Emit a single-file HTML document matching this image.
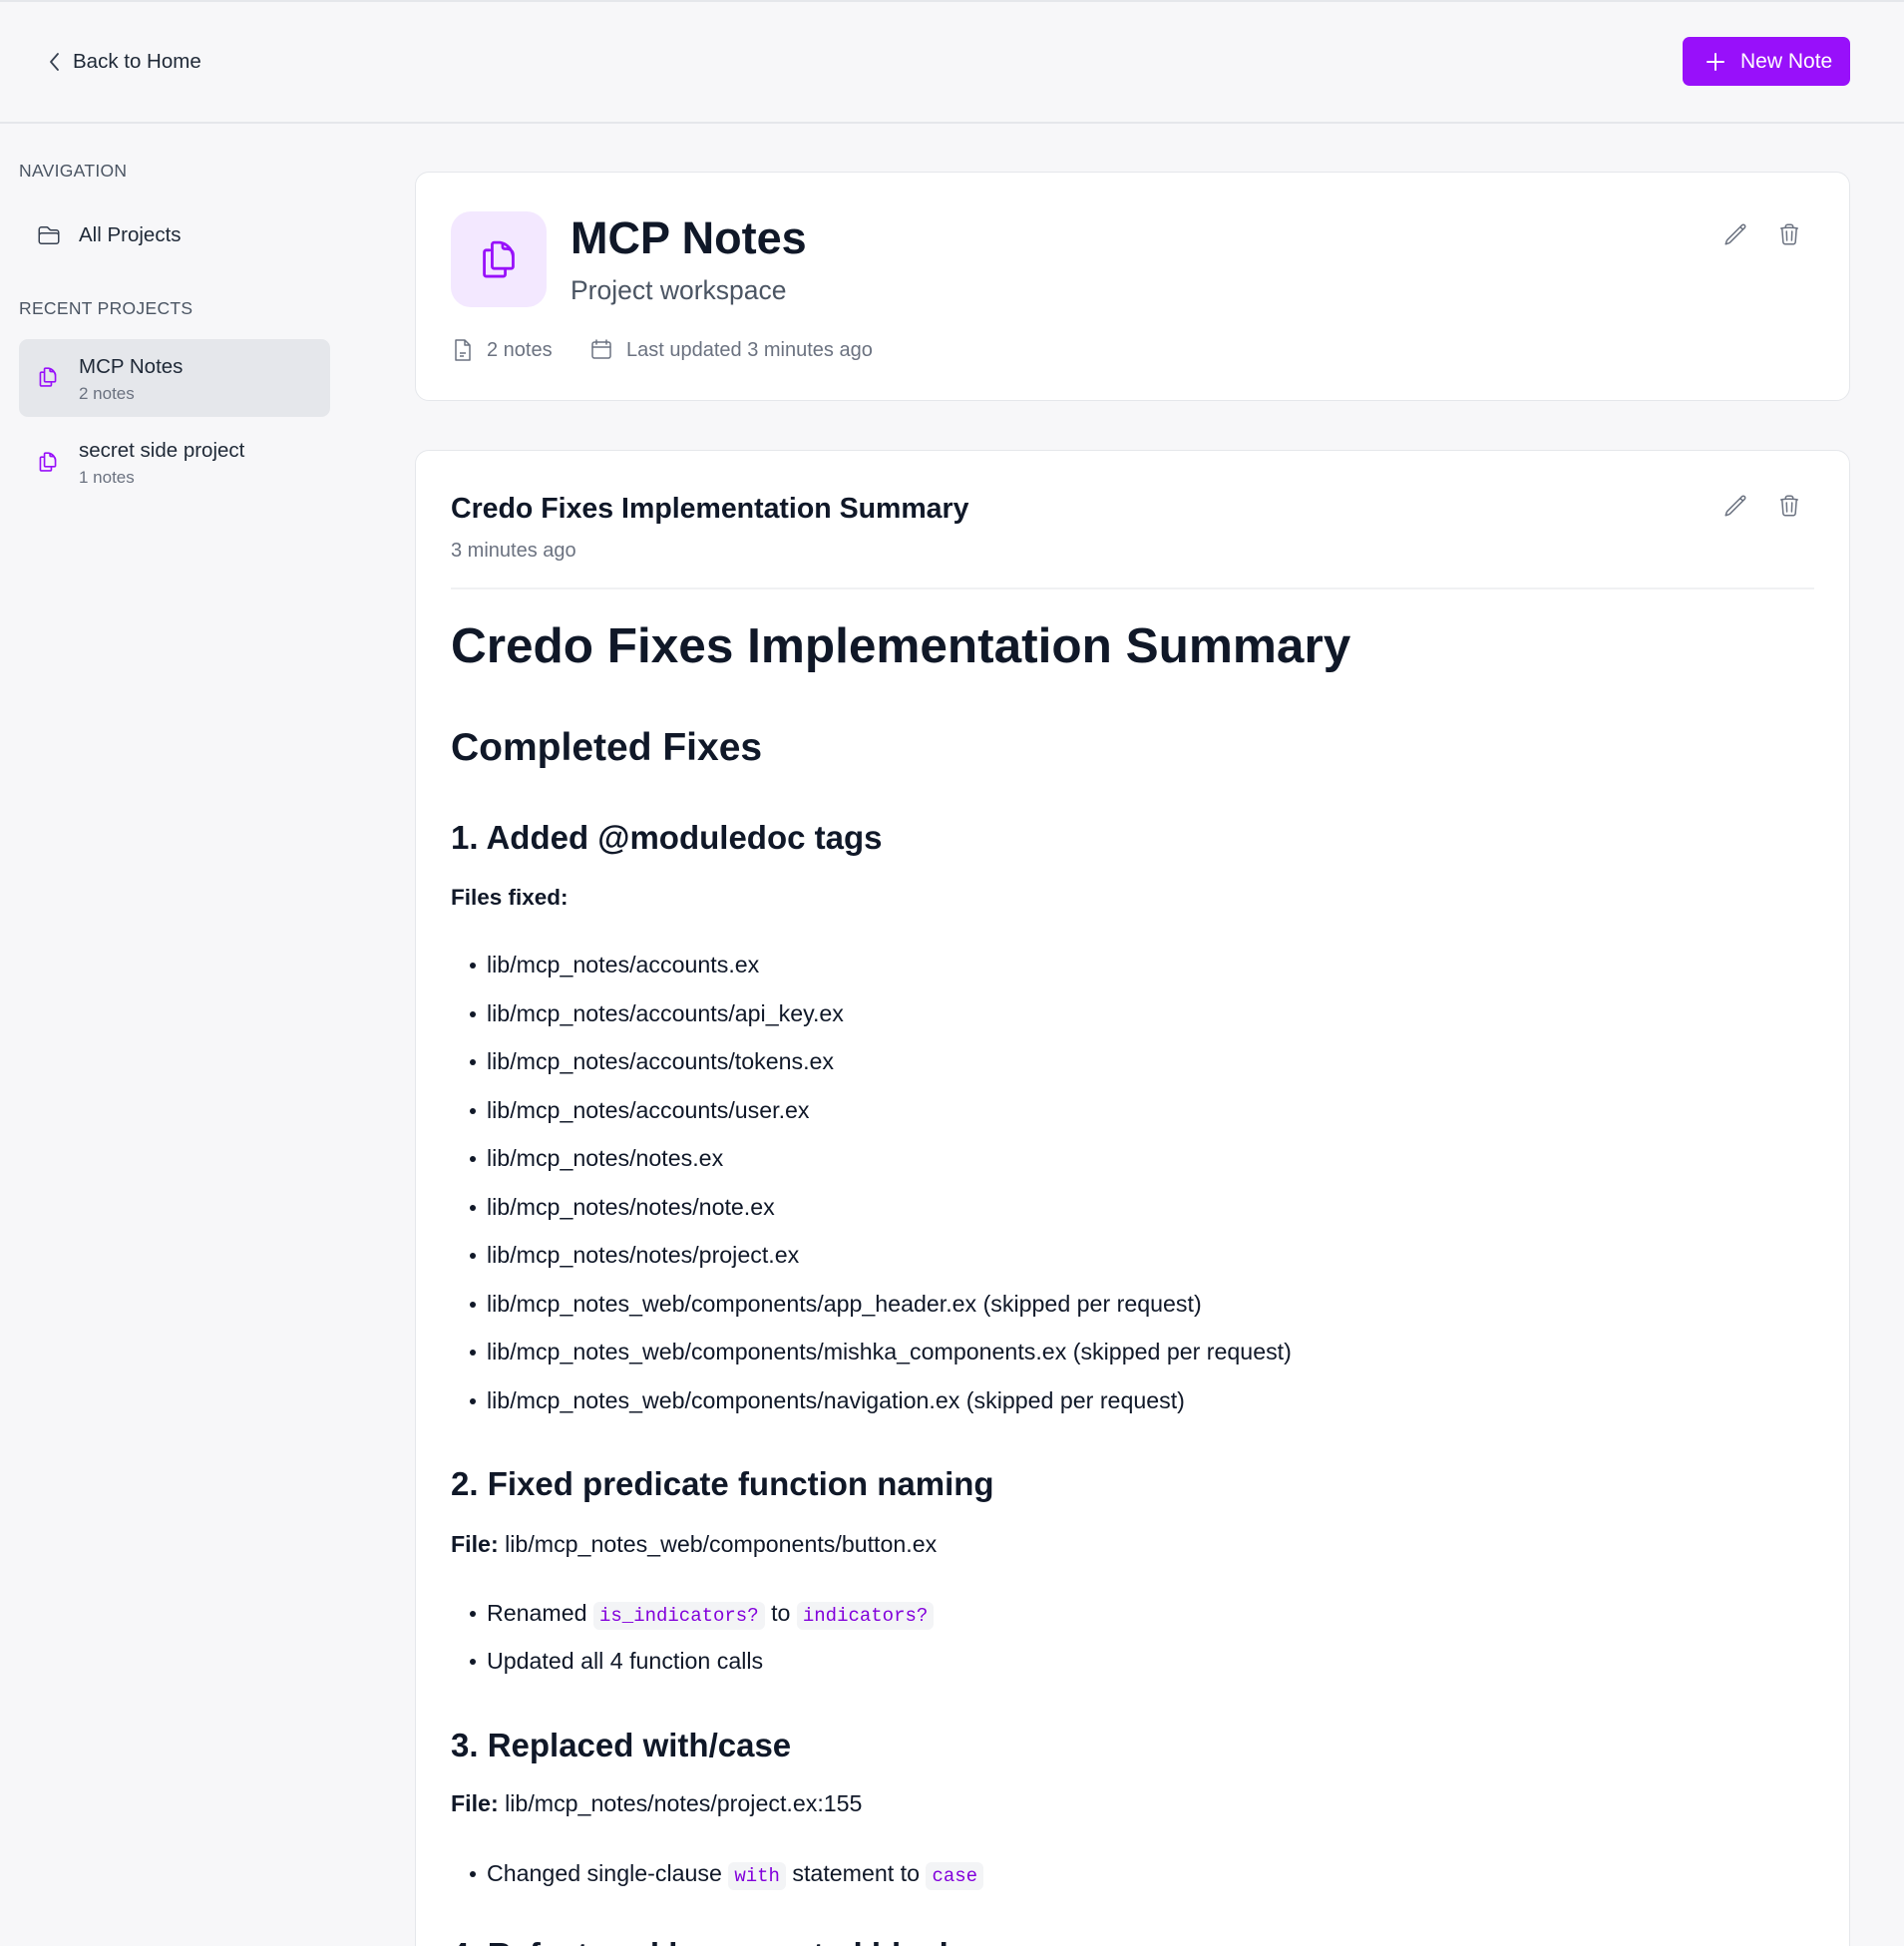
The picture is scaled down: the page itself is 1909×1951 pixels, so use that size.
<!DOCTYPE html>
<html style="height:1951px;overflow:hidden"><head><meta charset="utf-8">
<style>
*{margin:0;padding:0;box-sizing:border-box}
body{width:1909px;height:1951px;overflow:hidden;background:#f7f7f9;font-family:"Liberation Sans",sans-serif;color:#101828;position:relative}
.a{position:absolute;white-space:nowrap}
.c{display:flex;align-items:center}
svg{display:block}
.card{position:absolute;background:#fff;border:1.5px solid #e5e7eb;border-radius:14px}
.li{position:absolute;left:488px;font-size:23.2px;line-height:30px;color:#101828;white-space:nowrap}
.li:before{content:"";position:absolute;left:-17px;top:13px;width:6px;height:6px;border-radius:50%;background:#101828}
code{font-family:"Liberation Mono",monospace;font-size:19px;color:#8200db;background:#f3f4f6;border-radius:6px;padding:3px 6px}
.h3{font-size:33px;font-weight:bold;line-height:40px}
</style></head><body>
<div class="a" style="left:0;top:0;width:1909px;height:2px;background:#e5e7eb"></div>
<div class="a" style="left:0;top:122px;width:1909px;height:1.5px;background:#e5e7eb"></div>

<svg class="a" style="left:46px;top:51px" width="18" height="22" viewBox="0 0 18 22"><path d="M12 3 L5 11 L12 19" fill="none" stroke="#374151" stroke-width="1.8" stroke-linecap="round" stroke-linejoin="round"/></svg>
<div class="a" style="left:73px;top:49px;font-size:20.5px;line-height:26px;color:#1f2937">Back to Home</div>
<div class="a c" style="left:1687px;top:37px;width:168px;height:49px;background:#9810fa;border-radius:7px;color:#fff;font-size:21px;padding-left:22px">
<svg width="22" height="22" viewBox="0 0 22 22"><path d="M11 3v16M3 11h16" stroke="#fff" stroke-width="2" stroke-linecap="round"/></svg>
<span style="margin-left:14px">New Note</span></div>

<div class="a" style="left:19px;top:161px;font-size:17.5px;color:#4b5563;letter-spacing:.3px">NAVIGATION</div>
<svg class="a" style="left:37px;top:224px" width="24" height="24" viewBox="0 0 24 24" fill="none" stroke="#374151" stroke-width="1.5" stroke-linecap="round" stroke-linejoin="round"><path d="M2.25 12.75V12A2.25 2.25 0 0 1 4.5 9.75h15A2.25 2.25 0 0 1 21.75 12v.75m-8.69-6.44-2.12-2.12a1.5 1.5 0 0 0-1.061-.44H4.5A2.25 2.25 0 0 0 2.25 6v12a2.25 2.25 0 0 0 2.25 2.25h15A2.25 2.25 0 0 0 21.75 18V9a2.25 2.25 0 0 0-2.25-2.25h-5.379a1.5 1.5 0 0 1-1.06-.44Z"/></svg>
<div class="a" style="left:79px;top:223px;font-size:20.5px;line-height:26px;color:#1f2937">All Projects</div>
<div class="a" style="left:19px;top:299px;font-size:17.5px;color:#4b5563;letter-spacing:.3px">RECENT PROJECTS</div>
<div class="a" style="left:19px;top:340px;width:312px;height:78px;background:#e5e7eb;border-radius:9px"></div>
<svg class="a" style="left:37px;top:367px" width="22" height="22" viewBox="0 0 24 24" fill="none" stroke="#9810fa" stroke-width="1.8" stroke-linecap="round" stroke-linejoin="round"><path d="M15.75 17.25v3.375c0 .621-.504 1.125-1.125 1.125h-9.75a1.125 1.125 0 0 1-1.125-1.125V7.875c0-.621.504-1.125 1.125-1.125H6.75m9 10.5h3.375c.621 0 1.125-.504 1.125-1.125V11.25c0-4.460-3.243-8.161-7.5-8.876H9.375c-.621 0-1.125.504-1.125 1.125v12.626c0 .621.504 1.125 1.125 1.125h6.375M20.250 11.250v-1.875a3.375 3.375 0 0 0-3.375-3.375h-1.5a1.125 1.125 0 0 1-1.125-1.125v-1.5"/></svg>
<div class="a" style="left:79px;top:355px;font-size:20.5px;line-height:26px;color:#1f2937">MCP Notes</div>
<div class="a" style="left:79px;top:384px;font-size:17px;line-height:22px;color:#6b7280">2 notes</div>
<svg class="a" style="left:37px;top:452px" width="22" height="22" viewBox="0 0 24 24" fill="none" stroke="#9810fa" stroke-width="1.8" stroke-linecap="round" stroke-linejoin="round"><path d="M15.75 17.25v3.375c0 .621-.504 1.125-1.125 1.125h-9.75a1.125 1.125 0 0 1-1.125-1.125V7.875c0-.621.504-1.125 1.125-1.125H6.75m9 10.5h3.375c.621 0 1.125-.504 1.125-1.125V11.25c0-4.46-3.243-8.161-7.5-8.876H9.375c-.621 0-1.125.504-1.125 1.125v12.626c0 .621.504 1.125 1.125 1.125h6.375M20.25 11.25v-1.875a3.375 3.375 0 0 0-3.375-3.375h-1.5a1.125 1.125 0 0 1-1.125-1.125v-1.5"/></svg>
<div class="a" style="left:79px;top:439px;font-size:20.5px;line-height:26px;color:#1f2937">secret side project</div>
<div class="a" style="left:79px;top:468px;font-size:17px;line-height:22px;color:#6b7280">1 notes</div>

<div class="card" style="left:416px;top:172px;width:1439px;height:230px"></div>
<div class="a c" style="left:452px;top:212px;width:96px;height:96px;background:#f3e8ff;border-radius:20px;justify-content:center">
<svg width="42" height="42" viewBox="0 0 24 24" fill="none" stroke="#9810fa" stroke-width="1.6" stroke-linecap="round" stroke-linejoin="round"><path d="M15.75 17.25v3.375c0 .621-.504 1.125-1.125 1.125h-9.75a1.125 1.125 0 0 1-1.125-1.125V7.875c0-.621.504-1.125 1.125-1.125H6.75m9 10.5h3.375c.621 0 1.125-.504 1.125-1.125V11.25c0-4.46-3.243-8.161-7.5-8.876H9.375c-.621 0-1.125.504-1.125 1.125v12.626c0 .621.504 1.125 1.125 1.125h6.375M20.25 11.25v-1.875a3.375 3.375 0 0 0-3.375-3.375h-1.5a1.125 1.125 0 0 1-1.125-1.125v-1.5"/></svg></div>
<div class="a" style="left:572px;top:213px;font-size:45px;line-height:52px;font-weight:bold;color:#101828">MCP Notes</div>
<div class="a" style="left:572px;top:275px;font-size:26.5px;line-height:32px;color:#4b5563">Project workspace</div>
<svg class="a" style="left:453px;top:339px" width="22" height="24" viewBox="0 0 22 24" fill="none" stroke="#6b7280" stroke-width="1.5" stroke-linejoin="round"><path d="M4 2h9l5 5v15H4z M13 2v5h5 M8 15h6 M8 18h4"/></svg>
<div class="a" style="left:488px;top:338px;font-size:20px;line-height:26px;color:#6b7280">2 notes</div>
<svg class="a" style="left:592px;top:339px" width="22" height="22" viewBox="0 0 22 22" fill="none" stroke="#6b7280" stroke-width="1.5" stroke-linecap="round"><rect x="2" y="4" width="18" height="16" rx="2"/><path d="M2 9h18M6 2v4M16 2v4"/></svg>
<div class="a" style="left:628px;top:338px;font-size:20px;line-height:26px;color:#6b7280">Last updated 3 minutes ago</div>
<svg class="a" style="left:1728px;top:223px" width="24" height="24" viewBox="0 0 24 24" fill="none" stroke="#6b7280" stroke-width="1.5" stroke-linecap="round" stroke-linejoin="round"><path d="m16.862 4.487 1.687-1.688a1.875 1.875 0 1 1 2.652 2.652L6.832 19.82a4.5 4.5 0 0 1-1.897 1.13l-2.685.8.8-2.685a4.5 4.5 0 0 1 1.13-1.897L16.863 4.487Zm0 0L19.5 7.125"/></svg>
<svg class="a" style="left:1782px;top:223px" width="24" height="24" viewBox="0 0 24 24" fill="none" stroke="#6b7280" stroke-width="1.5" stroke-linecap="round" stroke-linejoin="round"><path d="m14.74 9-.346 9m-4.788 0L9.26 9m9.968-3.21c.342.052.682.107 1.022.166m-1.022-.165L18.16 19.673a2.25 2.25 0 0 1-2.244 2.077H8.084a2.25 2.25 0 0 1-2.244-2.077L4.772 5.79m14.456 0a48.108 48.108 0 0 0-3.478-.397m-12 .562c.34-.059.68-.114 1.022-.165m0 0a48.11 48.11 0 0 1 3.478-.397m7.5 0v-.916c0-1.18-.91-2.164-2.09-2.201a51.964 51.964 0 0 0-3.32 0c-1.18.037-2.090 1.022-2.090 2.201v.916m7.5 0a48.667 48.667 0 0 0-7.5 0"/></svg>

<div class="card" style="left:416px;top:451px;width:1439px;height:1520px"></div>
<div class="a" style="left:452px;top:493px;font-size:28.5px;line-height:34px;font-weight:bold;color:#101828">Credo Fixes Implementation Summary</div>
<div class="a" style="left:452px;top:539px;font-size:20px;line-height:26px;color:#6b7280">3 minutes ago</div>
<div class="a" style="left:452px;top:589px;width:1367px;height:1.5px;background:#f0f1f3"></div>
<svg class="a" style="left:1728px;top:495px" width="24" height="24" viewBox="0 0 24 24" fill="none" stroke="#6b7280" stroke-width="1.5" stroke-linecap="round" stroke-linejoin="round"><path d="m16.862 4.487 1.687-1.688a1.875 1.875 0 1 1 2.652 2.652L6.832 19.82a4.5 4.5 0 0 1-1.897 1.13l-2.685.8.8-2.685a4.5 4.5 0 0 1 1.13-1.897L16.863 4.487Zm0 0L19.5 7.125"/></svg>
<svg class="a" style="left:1782px;top:495px" width="24" height="24" viewBox="0 0 24 24" fill="none" stroke="#6b7280" stroke-width="1.5" stroke-linecap="round" stroke-linejoin="round"><path d="m14.74 9-.346 9m-4.788 0L9.26 9m9.968-3.21c.342.052.682.107 1.022.166m-1.022-.165L18.16 19.673a2.25 2.25 0 0 1-2.244 2.077H8.084a2.25 2.25 0 0 1-2.244-2.077L4.772 5.79m14.456 0a48.108 48.108 0 0 0-3.478-.397m-12 .562c.34-.059.68-.114 1.022-.165m0 0a48.11 48.11 0 0 1 3.478-.397m7.5 0v-.916c0-1.18-.91-2.164-2.09-2.201a51.964 51.964 0 0 0-3.32 0c-1.18.037-2.09 1.022-2.09 2.201v.916m7.5 0a48.667 48.667 0 0 0-7.5 0"/></svg>

<div class="a" style="left:452px;top:617px;font-size:49.5px;line-height:62px;font-weight:bold;color:#101828">Credo Fixes Implementation Summary</div>
<div class="a" style="left:452px;top:726px;font-size:39px;line-height:48px;font-weight:bold;color:#101828">Completed Fixes</div>
<div class="a h3" style="left:452px;top:820px">1. Added @moduledoc tags</div>
<div class="a" style="left:452px;top:886px;font-size:22.5px;line-height:28px;font-weight:bold">Files fixed:</div>
<div class="li" style="top:952px">lib/mcp_notes/accounts.ex</div>
<div class="li" style="top:1001px">lib/mcp_notes/accounts/api_key.ex</div>
<div class="li" style="top:1049px">lib/mcp_notes/accounts/tokens.ex</div>
<div class="li" style="top:1098px">lib/mcp_notes/accounts/user.ex</div>
<div class="li" style="top:1146px">lib/mcp_notes/notes.ex</div>
<div class="li" style="top:1195px">lib/mcp_notes/notes/note.ex</div>
<div class="li" style="top:1243px">lib/mcp_notes/notes/project.ex</div>
<div class="li" style="top:1292px">lib/mcp_notes_web/components/app_header.ex (skipped per request)</div>
<div class="li" style="top:1340px">lib/mcp_notes_web/components/mishka_components.ex (skipped per request)</div>
<div class="li" style="top:1389px">lib/mcp_notes_web/components/navigation.ex (skipped per request)</div>
<div class="a h3" style="left:452px;top:1468px">2. Fixed predicate function naming</div>
<div class="a" style="left:452px;top:1534px;font-size:23.2px;line-height:28px"><b>File:</b> lib/mcp_notes_web/components/button.ex</div>
<div class="li" style="top:1602px">Renamed <code>is_indicators?</code> to <code>indicators?</code></div>
<div class="li" style="top:1650px">Updated all 4 function calls</div>
<div class="a h3" style="left:452px;top:1730px">3. Replaced with/case</div>
<div class="a" style="left:452px;top:1794px;font-size:23.2px;line-height:28px"><b>File:</b> lib/mcp_notes/notes/project.ex:155</div>
<div class="li" style="top:1863px">Changed single-clause <code>with</code> statement to <code>case</code></div>
<div class="a h3" style="left:452px;top:1940px">4. Refactored large nested blocks</div>
</body></html>
